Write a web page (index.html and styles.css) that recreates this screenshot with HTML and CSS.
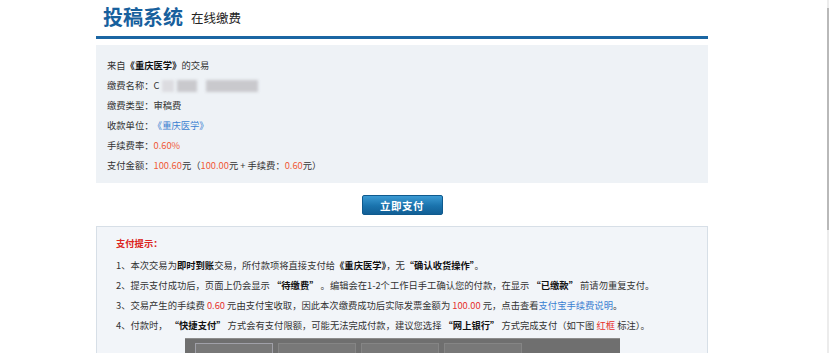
FILE: index.html
```html
<!DOCTYPE html>
<html>
<head>
    <meta charset="UTF-8">
    <title>投稿系统 - 在线缴费</title>
    <link rel="stylesheet" href="styles.css">
</head>
<body>
    <div class="page">
        <div class="header">
            <h1>投稿系统</h1>
            <span class="sub">在线缴费</span>
        </div>

        <div class="info-box">
            <p>来自<b>《重庆医学》</b>的交易</p>
            <p>缴费名称：C<span class="blur"><i class="b1"></i><i class="b2"></i><i class="b3"></i></span></p>
            <p>缴费类型：审稿费</p>
            <p>收款单位：<a class="link unit">《重庆医学》</a></p>
            <p>手续费率：<span class="num">0.60%</span></p>
            <p>支付金额：<span class="num">100.60</span>元（<span class="num">100.00</span>元 + 手续费：<span class="num">0.60</span>元）</p>
        </div>

        <div class="pay-row">
            <button class="pay-btn">立即支付</button>
        </div>

        <div class="tips-box">
            <div class="tips-title">支付提示：</div>
            <p>1、本次交易为<b>即时到账</b>交易，所付款项将直接支付给<b>《重庆医学》</b>，无<b>“确认收货操作”</b>。</p>
            <p>2、提示支付成功后，页面上仍会显示 <b>“待缴费”</b> 。编辑会在1-2个工作日手工确认您的付款，在显示 <b>“已缴款”</b> 前请勿重复支付。</p>
            <p>3、交易产生的手续费 <span class="red">0.60</span> 元由支付宝收取，因此本次缴费成功后实际发票金额为 <span class="red">100.00</span> 元，点击查看<a class="link">支付宝手续费说明</a>。</p>
            <p>4、付款时， <b>“快捷支付”</b> 方式会有支付限额，可能无法完成付款，建议您选择 <b>“网上银行”</b> 方式完成支付（如下图 <span class="red">红框</span> 标注）。</p>
            <div class="shot">
                <div class="tab first"></div>
                <div class="tab"></div>
                <div class="tab"></div>
                <div class="tab"></div>
            </div>
        </div>
    </div>
    <div class="scrollbar"><div class="thumb"></div></div>
</body>
</html>
```

FILE: styles.css
```css
body {
    margin: 0;
    background: #fff;
    font-family: "Noto Sans CJK SC", "Noto Sans", sans-serif;
    color: #333;
    font-size: 9.3px;
}

p {
    margin: 0;
    line-height: 20px;
    white-space: nowrap;
}

b {
    color: #111;
}

.page {
    width: 612px;
    margin-left: 96px;
}

.header {
    display: flex;
    align-items: center;
    gap: 8px;
    padding-left: 7px;
    border-bottom: 3px solid #1b66a3;
    box-sizing: border-box;
    height: 39px;
    padding-bottom: 4px;
}

.header h1 {
    margin: 0;
    font-size: 20px;
    font-weight: 700;
    color: #17609d;
}

.header .sub {
    font-size: 12.5px;
    color: #222;
    padding-top: 3px;
}

.info-box {
    margin-top: 6px;
    background: #eef2f6;
    padding: 10px 11px 8px;
}

.num {
    color: #f05a36;
}

.link {
    color: #3a7fd1;
    text-decoration: none;
}

.unit {
    margin-left: 4px;
}

.blur {
    display: inline-block;
    position: relative;
    width: 98px;
    height: 12px;
    vertical-align: middle;
    margin-left: 3px;
}

.blur i {
    position: absolute;
    top: 0;
    height: 12px;
    background: #c9c9cd;
    filter: blur(1.5px);
}

.blur .b1 { left: 0; width: 12px; background: #dcdce0; }
.blur .b2 { left: 15px; width: 20px; }
.blur .b3 { left: 44px; width: 52px; }

.pay-row {
    display: flex;
    justify-content: center;
    padding: 12px 0 11px;
}

.pay-btn {
    width: 81px;
    height: 20px;
    border: 1px solid #0f5a8e;
    border-radius: 2px;
    background: linear-gradient(#3b9ad3, #1a73ad 55%, #125f95);
    color: #fff;
    font-family: inherit;
    font-size: 10.5px;
    font-weight: 700;
    padding: 0;
    letter-spacing: 0.5px;
}

.tips-box {
    background: #f2f5f9;
    border: 1px solid #d7dfe7;
    border-bottom: none;
    padding: 6px 0 0 19px;
    height: 127px;
    overflow: hidden;
    box-sizing: border-box;
}

.tips-title {
    color: #dc2420;
    font-weight: 700;
    line-height: 20px;
    margin-bottom: 2px;
}

.red {
    color: #e6302c;
}

.shot {
    margin: 3px 0 0 69px;
    width: 435px;
    height: 40px;
    background: #6f6f6f;
    border-top: 1px solid #8d8d8d;
    display: flex;
    gap: 5px;
    padding: 4px 0 0 10px;
    box-sizing: border-box;
}

.tab {
    width: 76px;
    background: #787878;
    border: 1px solid #858585;
}

.tab.first {
    border-color: #a0a0a8;
}

.scrollbar {
    position: fixed;
    top: 0;
    right: 1px;
    width: 2px;
    height: 100%;
    background: #ececec;
}

.thumb {
    margin-top: 8px;
    height: 222px;
    background: #b9b9b9;
}
```
